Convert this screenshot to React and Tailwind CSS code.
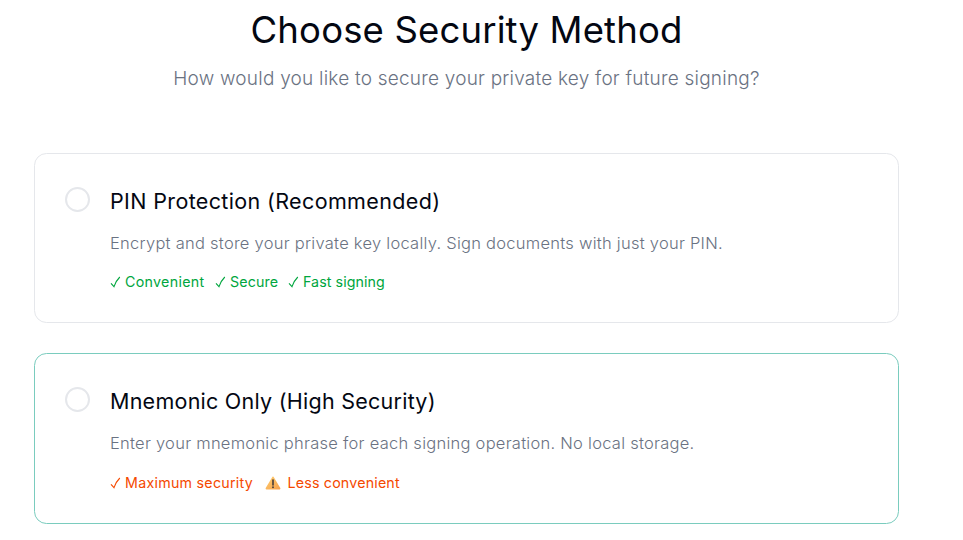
function Check() {
  return (
    <svg viewBox="0 0 11 13" className="mr-[4px] h-[13px] w-[11px] shrink-0" fill="none" stroke="currentColor" strokeWidth="1.1">
      <path d="M1 7.4 L4 10.6 Q5.8 5 9.8 1" />
    </svg>
  );
}

function Warning() {
  return (
    <svg viewBox="0 0 16 14" className="mr-[6.5px] h-[14px] w-[16px] shrink-0">
      <defs>
        <linearGradient id="warn" x1="0" y1="0" x2="1" y2="1">
          <stop offset="0" stopColor="#ffd071" />
          <stop offset="1" stopColor="#f6a04c" />
        </linearGradient>
      </defs>
      <path d="M8 0.6 Q8.6 0.6 9 1.4 L15.3 12 Q15.8 13.3 14.6 13.4 H1.4 Q0.2 13.3 0.7 12 L7 1.4 Q7.4 0.6 8 0.6Z" fill="url(#warn)" />
      <path d="M8 4 V9" stroke="#443b3a" strokeWidth="1.6" strokeLinecap="round" />
      <circle cx="8" cy="11.3" r="0.95" fill="#443b3a" />
    </svg>
  );
}

function Option({ className, title, description, children }) {
  return (
    <section className={`flex rounded-[12.5px] border pl-[30px] ${className}`}>
      <span className="mt-[33px] mr-[20px] h-[25px] w-[25px] shrink-0 rounded-full border-2 border-[#e5e7eb]" />
      <div className="whitespace-nowrap pt-[30px]">
        <h2 className="h-[34px] leading-[34px]">{title}</h2>
        <p className="mt-[11px] h-[28px] leading-[28px] text-[#6a7282]">{description}</p>
        {children}
      </div>
    </section>
  );
}

export default function App() {
  return (
    <main className="h-[540px] w-[963px] overflow-hidden bg-white font-['Inter',sans-serif] text-[#030712]">
      <div className="ml-[34px] flex w-[865px] flex-col">
        <header className="flex h-[153px] flex-col items-center whitespace-nowrap pt-[8px]">
          <h1 className="h-[45px] text-[36.5px] leading-[45px] font-normal tracking-[0.15px]">Choose Security Method</h1>
          <p className="mt-[11px] h-[30px] text-[19px] leading-[30px] font-light tracking-[0.22px] text-[#6a7282]">
            How would you like to secure your private key for future signing?
          </p>
        </header>
        <Option
          className="h-[170px] border-[#e5e7eb]"
          title={<span className="text-[21.5px] tracking-[0.36px]">PIN Protection (Recommended)</span>}
          description={<span className="text-[16.5px] font-light tracking-[0.26px]">Encrypt and store your private key locally. Sign documents with just your PIN.</span>}
        >
          <div className="mt-[15px] flex h-[20px] items-center text-[14.25px] text-[#00a63e]">
            <span className="flex w-[105px] items-center tracking-[0.3px]"><Check />Convenient</span>
            <span className="flex w-[73px] items-center tracking-[0.1px]"><Check />Secure</span>
            <span className="flex items-center tracking-[0.06px]"><Check />Fast signing</span>
          </div>
        </Option>
        <Option
          className="mt-[30px] h-[171px] border-[#7accbe]"
          title={<span className="text-[21.5px] tracking-[0.25px]">Mnemonic Only (High Security)</span>}
          description={<span className="text-[16.5px] font-light tracking-[0.26px]">Enter your mnemonic phrase for each signing operation. No local storage.</span>}
        >
          <div className="mt-[16px] flex h-[20px] items-center text-[14.25px] text-[#f54900]">
            <span className="flex w-[155px] items-center tracking-[0.26px]"><Check />Maximum security</span>
            <span className="flex items-center tracking-[0.18px]"><Warning />Less convenient</span>
          </div>
        </Option>
      </div>
    </main>
  );
}
